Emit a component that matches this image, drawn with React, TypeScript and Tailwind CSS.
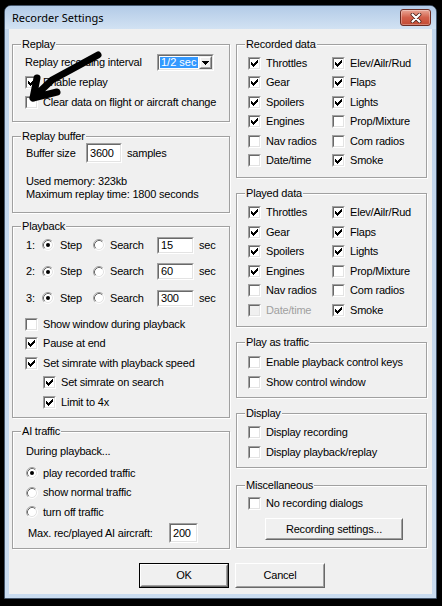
import React from "react";

const Check = ({ checked = false, disabled = false }: { checked?: boolean; disabled?: boolean }) => (
  <span className="flex w-[13px] h-[13px] shrink-0 border border-t-[#a0a0a0] border-l-[#a0a0a0] border-r-white border-b-white">
    <span
      className={
        "flex w-[11px] h-[11px] border border-t-[#696969] border-l-[#696969] border-r-[#e3e3e3] border-b-[#e3e3e3] " +
        (disabled ? "bg-[#f0f0f0]" : "bg-white")
      }
    >
      {checked && (
        <svg width="9" height="9" viewBox="0 0 9 9" shapeRendering="crispEdges" className="block">
          <path
            d="M7 1h1v1h-1zM6 2h2v1h-2zM1 3h1v1h-1zM5 3h3v1h-3zM1 4h2v1h-2zM4 4h3v1h-3zM1 5h5v1h-5zM2 6h3v1h-3zM3 7h1v1h-1z"
            fill={disabled ? "#a0a0a0" : "#000"}
          />
        </svg>
      )}
    </span>
  </span>
);

const Radio = ({ checked = false }: { checked?: boolean }) => (
  <svg width="12" height="12" viewBox="0 0 12 12" className="block shrink-0">
    <circle cx="6" cy="6" r="5" fill="#fff" />
    <path d="M2.11 9.89A5.5 5.5 0 0 1 9.89 2.11" fill="none" stroke="#a0a0a0" />
    <path d="M9.89 2.11A5.5 5.5 0 0 1 2.11 9.89" fill="none" stroke="#fff" />
    <path d="M2.82 9.18A4.5 4.5 0 0 1 9.18 2.82" fill="none" stroke="#696969" />
    <path d="M9.18 2.82A4.5 4.5 0 0 1 2.82 9.18" fill="none" stroke="#e3e3e3" />
    {checked && <circle cx="6" cy="6" r="2" fill="#000" />}
  </svg>
);

const Input = ({ value, cls }: { value: string; cls: string }) => (
  <span className={"flex shrink-0 border border-t-[#a0a0a0] border-l-[#a0a0a0] border-r-white border-b-white " + cls}>
    <span className="flex flex-1 items-center border border-t-[#696969] border-l-[#696969] border-r-[#e3e3e3] border-b-[#e3e3e3] bg-white pl-[2px]">
      {value}
    </span>
  </span>
);

const Btn = ({ label, def = false, cls }: { label: string; def?: boolean; cls: string }) => (
  <div className={"flex shrink-0 bg-[#f0f0f0] " + (def ? "border border-black " : "") + cls}>
    <div className="flex flex-1 border border-t-[#fff] border-l-[#fff] border-r-[#696969] border-b-[#696969]">
      <div className="flex flex-1 items-center justify-center border border-t-[#f0f0f0] border-l-[#f0f0f0] border-r-[#a0a0a0] border-b-[#a0a0a0]">
        {label}
      </div>
    </div>
  </div>
);

const CheckRow = ({
  label,
  checked = false,
  disabled = false,
  cls = "",
}: {
  label: string;
  checked?: boolean;
  disabled?: boolean;
  cls?: string;
}) => (
  <div className={"flex h-[19.5px] items-center " + cls}>
    <Check checked={checked} disabled={disabled} />
    <span className={"ml-[5px] whitespace-nowrap " + (disabled ? "text-[#a0a0a0]" : "")}>{label}</span>
  </div>
);

const RadioRow = ({ label, checked = false }: { label: string; checked?: boolean }) => (
  <div className="flex h-[19.5px] items-center pl-[1px]">
    <Radio checked={checked} />
    <span className="ml-[5px] whitespace-nowrap">{label}</span>
  </div>
);

const fs = "m-0 min-w-0 border border-[#a0a0a0] shadow-[inset_1px_1px_0_#fff,1px_1px_0_#fff]";
const lg = "ml-[8px] px-[1px] leading-[13px] bg-[#f0f0f0]";

const DataGrid = ({
  items,
  cls,
}: {
  items: { l: string; c?: boolean; d?: boolean }[][];
  cls: string;
}) => (
  <div className={"flex pl-[11px] " + cls}>
    <div className="flex w-[84px] flex-col">
      {items[0].map((it) => (
        <CheckRow key={it.l} label={it.l} checked={it.c} disabled={it.d} />
      ))}
    </div>
    <div className="flex flex-col">
      {items[1].map((it) => (
        <CheckRow key={it.l} label={it.l} checked={it.c} disabled={it.d} />
      ))}
    </div>
  </div>
);

const PlayRow = ({ n, v }: { n: string; v: string }) => (
  <div className="flex h-[20px] items-center">
    <span className="w-[17px] pl-[1px]">{n}</span>
    <Radio checked />
    <span className="ml-[6px] w-[33px]">Step</span>
    <Radio />
    <span className="ml-[5px] w-[47px]">Search</span>
    <Input value={v} cls="w-[37px] h-[17px]" />
    <span className="ml-[5px]">sec</span>
  </div>
);

export default function App() {
  return (
    <div className="relative w-[442px] h-[606px] overflow-hidden bg-black pl-[4px] pt-[5px] font-['Liberation_Sans',Arial,sans-serif] text-[11px] leading-[13px] tracking-[-0.2px] text-black">
      <div className="flex h-[594px] w-[433px] flex-col rounded-t-[7px] border border-[#45566b] bg-gradient-to-b from-[#c0d5ec] to-[#cadcf0]">
        <div className="flex h-[23px] items-center justify-between rounded-t-[6px] bg-gradient-to-b from-[#b3cbe7] to-[#d2e2f3] pl-[7px] pr-[5px]">
          <span className="font-['Noto_Sans',sans-serif] text-[11px] leading-[14px] tracking-normal text-black">Recorder Settings</span>
          <div className="flex h-[17px] w-[31px] items-center justify-center rounded-[3px] border border-[#6b2b22] bg-gradient-to-b from-[#e9a797] via-[#d2604b] to-[#c24a33] shadow-[inset_0_0_0_1px_rgba(255,255,255,0.3)]">
            <svg width="12" height="10" viewBox="0 0 12 10">
              <path d="M2.5 1.5L9.5 8.5M9.5 1.5L2.5 8.5" stroke="#4a1e17" strokeWidth="3.8" strokeLinecap="round" />
              <path d="M2.5 1.5L9.5 8.5M9.5 1.5L2.5 8.5" stroke="#fff" strokeWidth="2.2" strokeLinecap="round" />
            </svg>
          </div>
        </div>

        <div className="mx-[4px] flex h-[565px] flex-col bg-[#f0f0f0]">
          <div className="flex items-start gap-[6px] pl-[3px] pt-[9px]">
            {/* Left column */}
            <div className="flex w-[218px] flex-col">
              <fieldset className={fs + " pb-[9px]"}>
                <legend className={lg}>Replay</legend>
                <div className="flex flex-col pl-[12px]">
                  <div className="mt-[1px] flex h-[21px] items-center">
                    <span className="w-[132px] whitespace-nowrap">Replay recording interval</span>
                    <span className="flex h-[17px] w-[57px] border border-t-[#a0a0a0] border-l-[#a0a0a0] border-r-white border-b-white">
                      <span className="flex flex-1 border border-t-[#696969] border-l-[#696969] border-r-[#e3e3e3] border-b-[#e3e3e3] bg-white">
                        <span className="m-[1px] min-w-0 flex-1 overflow-hidden whitespace-nowrap bg-[#3399ff] pl-[1px] leading-[11px] tracking-normal text-white">
                          1/2 sec
                        </span>
                        <span className="flex w-[13px] border border-t-[#f0f0f0] border-l-[#f0f0f0] border-r-[#696969] border-b-[#696969] bg-[#f0f0f0]">
                          <span className="flex flex-1 items-center justify-center border border-t-white border-l-white border-r-[#a0a0a0] border-b-[#a0a0a0]">
                            <svg width="7" height="4" viewBox="0 0 7 4" shapeRendering="crispEdges">
                              <path d="M0 0h7v1h-7zM1 1h5v1h-5zM2 2h3v1h-3zM3 3h1v1h-1z" fill="#000" />
                            </svg>
                          </span>
                        </span>
                      </span>
                    </span>
                  </div>
                  <CheckRow label="Enable replay" checked />
                  <CheckRow label="Clear data on flight or aircraft change" />
                </div>
              </fieldset>

              <fieldset className={fs + " mt-[8px] pb-[11px]"}>
                <legend className={lg}>Replay buffer</legend>
                <div className="flex flex-col pl-[12px]">
                  <div className="flex h-[20px] items-center">
                    <span className="w-[61px] pl-[1px]">Buffer size</span>
                    <Input value="3600" cls="w-[36px] h-[20px]" />
                    <span className="ml-[5px]">samples</span>
                  </div>
                  <div className="mt-[12px] pl-[1px]">Used memory: 323kb</div>
                  <div className="pl-[1px]">Maximum replay time: 1800 seconds</div>
                </div>
              </fieldset>

              <fieldset className={fs + " mt-[7px] pb-[5px]"}>
                <legend className={lg}>Playback</legend>
                <div className="flex flex-col pl-[12px]">
                  <div className="mt-[2px] flex flex-col gap-[6.5px]">
                    <PlayRow n="1:" v="15" />
                    <PlayRow n="2:" v="60" />
                    <PlayRow n="3:" v="300" />
                  </div>
                  <div className="mt-[6.5px] flex flex-col">
                    <CheckRow label="Show window during playback" />
                    <CheckRow label="Pause at end" checked />
                    <CheckRow label="Set simrate with playback speed" checked />
                    <CheckRow label="Set simrate on search" checked cls="pl-[18px]" />
                    <CheckRow label="Limit to 4x" checked cls="pl-[18px]" />
                  </div>
                </div>
              </fieldset>

              <fieldset className={fs + " mt-[7px] pb-[5px]"}>
                <legend className={lg}>AI traffic</legend>
                <div className="flex flex-col pl-[12px]">
                  <div className="mt-[7px] pl-[1px]">During playback...</div>
                  <div className="mt-[5.5px] flex flex-col">
                    <RadioRow label="play recorded traffic" checked />
                    <RadioRow label="show normal traffic" />
                    <RadioRow label="turn off traffic" />
                  </div>
                  <div className="mt-[1px] flex h-[20px] items-center">
                    <span className="w-[144px] pl-[3px] whitespace-nowrap">Max. rec/played AI aircraft:</span>
                    <Input value="200" cls="w-[29px] h-[20px]" />
                  </div>
                </div>
              </fieldset>
            </div>

            {/* Right column */}
            <div className="flex w-[191px] flex-col">
              <fieldset className={fs + " pb-[6px]"}>
                <legend className={lg}>Recorded data</legend>
                <DataGrid
                  cls="mt-[2.5px]"
                  items={[
                    [
                      { l: "Throttles", c: true },
                      { l: "Gear", c: true },
                      { l: "Spoilers", c: true },
                      { l: "Engines", c: true },
                      { l: "Nav radios" },
                      { l: "Date/time" },
                    ],
                    [
                      { l: "Elev/Ailr/Rud", c: true },
                      { l: "Flaps", c: true },
                      { l: "Lights", c: true },
                      { l: "Prop/Mixture" },
                      { l: "Com radios" },
                      { l: "Smoke", c: true },
                    ],
                  ]}
                />
              </fieldset>

              <fieldset className={fs + " mt-[9.5px] pb-[6px]"}>
                <legend className={lg}>Played data</legend>
                <DataGrid
                  cls="mt-[3px]"
                  items={[
                    [
                      { l: "Throttles", c: true },
                      { l: "Gear", c: true },
                      { l: "Spoilers", c: true },
                      { l: "Engines", c: true },
                      { l: "Nav radios" },
                      { l: "Date/time", d: true },
                    ],
                    [
                      { l: "Elev/Ailr/Rud", c: true },
                      { l: "Flaps", c: true },
                      { l: "Lights", c: true },
                      { l: "Prop/Mixture" },
                      { l: "Com radios" },
                      { l: "Smoke", c: true },
                    ],
                  ]}
                />
              </fieldset>

              <fieldset className={fs + " mt-[9px] pb-[5px]"}>
                <legend className={lg}>Play as traffic</legend>
                <div className="mt-[4px] flex flex-col pl-[11px]">
                  <CheckRow label="Enable playback control keys" />
                  <CheckRow label="Show control window" />
                </div>
              </fieldset>

              <fieldset className={fs + " mt-[9px] pb-[5px]"}>
                <legend className={lg}>Display</legend>
                <div className="mt-[3px] flex flex-col pl-[11px]">
                  <CheckRow label="Display recording" />
                  <CheckRow label="Display playback/replay" />
                </div>
              </fieldset>

              <fieldset className={fs + " mt-[11px] pb-[7px]"}>
                <legend className={lg}>Miscellaneous</legend>
                <div className="mt-[2px] flex flex-col pl-[11px]">
                  <CheckRow label="No recording dialogs" />
                  <Btn label="Recording settings..." cls="mt-[4.5px] ml-[17px] w-[138px] h-[22px]" />
                </div>
              </fieldset>
            </div>
          </div>

          <div className="mt-[14px] flex gap-[6px] pl-[130px]">
            <Btn label="OK" def cls="w-[90px] h-[25px]" />
            <Btn label="Cancel" cls="w-[90px] h-[25px]" />
          </div>
        </div>
      </div>

      <svg
        className="pointer-events-none absolute left-0 top-0"
        width="442"
        height="606"
        viewBox="0 0 442 606"
      >
        <path
          d="M98 55L52 80L33 98M33 98L37 78M33 98L57 92"
          fill="none"
          stroke="#000"
          strokeWidth="7"
          strokeLinecap="round"
          strokeLinejoin="round"
        />
      </svg>
    </div>
  );
}
